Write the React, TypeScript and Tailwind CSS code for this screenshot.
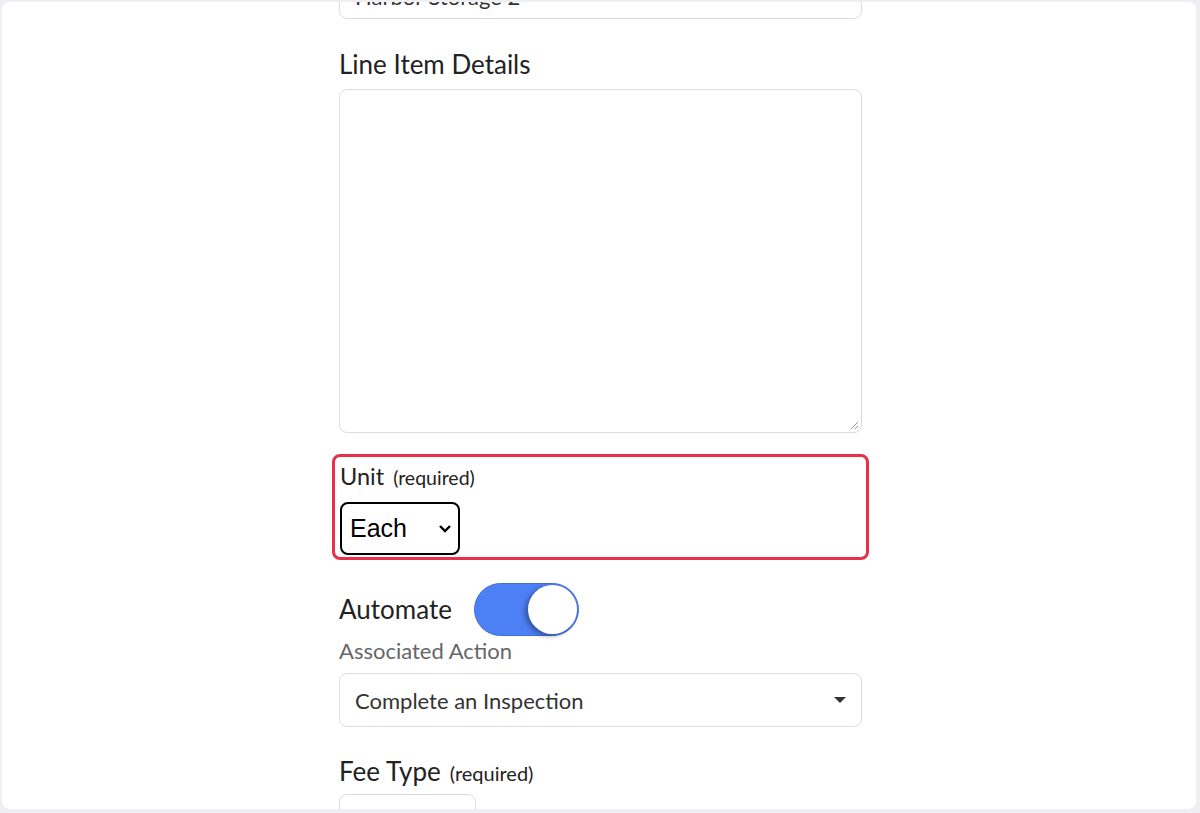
import React from "react";

export default function App() {
  return (
    <div className="h-[813px] w-[1200px] overflow-hidden bg-[#eeeef3] pt-[2px] pl-[2px] pr-[4px] pb-[4px]" style={{ fontFamily: "Lato, 'Open Sans', sans-serif" }}>
      <div className="h-full w-full overflow-hidden rounded-lg bg-white">
        <div className="ml-[337px] w-[523px] -mt-[37px] flex flex-col">
          {/* top input (cut) */}
          <div className="h-[54px] rounded-lg border-[1.5px] border-[#dcdcdc] px-[15px] pt-[9px] flex items-center text-[22px] text-[#333]">
            Harbor Storage 2
          </div>

          <div className="mt-[30px] text-[26px] leading-[30px] text-[#222]">Line Item Details</div>
          <div className="mt-[10px] h-[344px] rounded-lg border-[1.5px] border-[#dcdcdc] relative">
            <svg className="absolute right-[2px] bottom-[2px]" width="12" height="12" viewBox="0 0 12 12">
              <path d="M11 4 L4 11 M11 8 L8 11" stroke="#999" strokeWidth="1" />
            </svg>
          </div>

          <div className="mt-[21px] -mx-[7px] rounded-lg border-[3px] border-[#e8304a] pl-[5px] pt-[3px] pb-[2px]">
            <div className="flex items-baseline gap-[9px] text-[#222]">
              <span className="text-[23.5px] leading-[32px]">Unit</span>
              <span className="text-[19.5px]">(required)</span>
            </div>
            <div className="mt-[10px] h-[53px] w-[120px] rounded-lg border-2 border-black flex items-center pl-[8px] pr-[6px] justify-between" style={{ fontFamily: "'Liberation Sans', Arial, sans-serif" }}>
              <span className="text-[25px] text-black">Each</span>
              <svg width="14" height="10" viewBox="0 0 14 10">
                <path d="M2 2 L7 7 L12 2" stroke="black" strokeWidth="2.4" fill="none" />
              </svg>
            </div>
          </div>

          <div className="mt-[23px] flex items-center gap-[22px]">
            <span className="text-[26px] text-[#222]">Automate</span>
            <div className="relative h-[53px] w-[105px] rounded-full bg-[#4e80f5] border border-[#3f6fd8]">
              <div className="absolute right-[1px] top-[1px] h-[49px] w-[49px] rounded-full bg-white shadow-[-3px_2px_5px_rgba(0,0,0,0.35)]" />
            </div>
          </div>
          <div className="mt-[1px] text-[22px] leading-[28px] text-[#666]">Associated Action</div>
          <div className="mt-[8px] h-[54px] rounded-lg border-[1.5px] border-[#dcdcdc] flex items-center justify-between pl-[15px] pr-[15px]">
            <span className="text-[22px] text-[#333]">Complete an Inspection</span>
            <svg width="12" height="7" viewBox="0 0 12 7">
              <path d="M0 0 L12 0 L6 6 Z" fill="#333" />
            </svg>
          </div>

          <div className="mt-[28px] flex items-baseline gap-[9px] text-[#222]">
            <span className="text-[26px] leading-[32px]">Fee Type</span>
            <span className="text-[20px]">(required)</span>
          </div>
          <div className="mt-[6px] h-[54px] w-[137px] rounded-lg border-[1.5px] border-[#dcdcdc]" />
        </div>
      </div>
    </div>
  );
}
